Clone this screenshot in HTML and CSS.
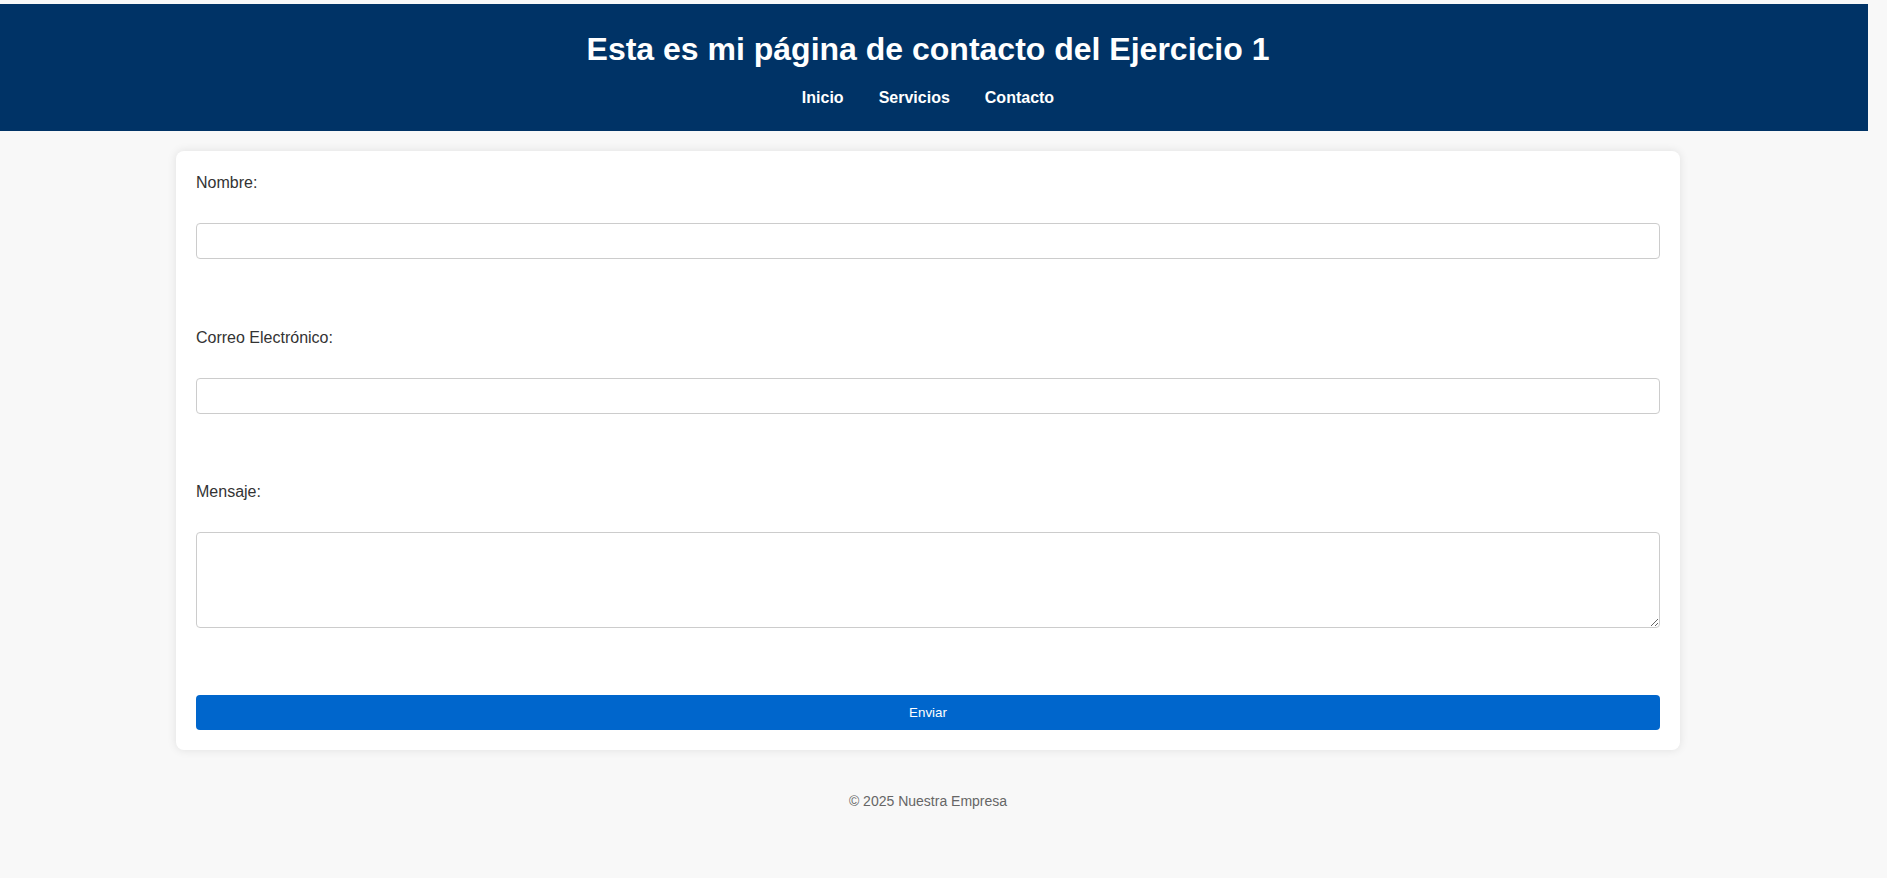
FILE: index.html
```html
<!DOCTYPE html>
<html lang="es">
<head>
<meta charset="utf-8">
<title>Contacto</title>
<link rel="stylesheet" href="styles.css">
</head>
<body>
<header class="site-header">
  <h1 class="site-title">Esta es mi página de contacto del Ejercicio 1</h1>
  <nav class="site-nav">
    <a href="#" class="nav-link">Inicio</a>
    <a href="#" class="nav-link">Servicios</a>
    <a href="#" class="nav-link">Contacto</a>
  </nav>
</header>
<div class="page">
  <main class="card">
    <form class="contact-form">
      <label class="field-label" for="nombre">Nombre:</label>
      <input class="field-input" type="text" id="nombre">
      <label class="field-label" for="correo">Correo Electrónico:</label>
      <input class="field-input" type="email" id="correo">
      <label class="field-label" for="mensaje">Mensaje:</label>
      <textarea class="field-textarea" id="mensaje"></textarea>
      <button class="submit-btn" type="submit">Enviar</button>
    </form>
  </main>
  <footer class="site-footer">© 2025 Nuestra Empresa</footer>
</div>
</body>
</html>
```
FILE: styles.css
```css
html, body {
  margin: 0;
  padding: 0;
}
body {
  background: #f8f8f8;
  font-family: "Liberation Sans", Arial, sans-serif;
  color: #333;
}
.site-header {
  margin: 4px 19px 0 0;
  padding: 27px 12px 24px 0;
  background: #003366;
  color: #fff;
  text-align: center;
}
.site-title {
  margin: 0 0 21px;
  font-size: 32px;
  font-weight: bold;
}
.site-nav {
  display: flex;
  justify-content: center;
  gap: 35px;
  font-size: 16px;
  font-weight: bold;
}
.nav-link {
  color: #fff;
  text-decoration: none;
}
.page {
  padding-right: 31px;
}
.card {
  box-sizing: border-box;
  width: 1504px;
  margin: 20px auto 0;
  padding: 23px 20px 20px;
  background: #fff;
  border-radius: 8px;
  box-shadow: 0 0 10px rgba(0, 0, 0, 0.1);
}
.contact-form {
  display: flex;
  flex-direction: column;
}
.field-label {
  display: block;
  font-size: 16px;
  color: #333;
  margin-bottom: 31px;
}
.field-input,
.field-textarea {
  box-sizing: border-box;
  width: 100%;
  border: 1px solid #ccc;
  border-radius: 4px;
  background: #fff;
  font-family: "Liberation Sans", Arial, sans-serif;
  font-size: 14px;
  padding: 8px;
}
.field-input {
  height: 36px;
  margin-bottom: 69.5px;
}
.field-textarea {
  height: 96px;
  margin-bottom: 67px;
}
.submit-btn {
  box-sizing: border-box;
  width: 100%;
  height: 35px;
  border: none;
  border-radius: 4px;
  background: #0066cc;
  color: #fff;
  font-family: "Liberation Sans", Arial, sans-serif;
  font-size: 13.33px;
  cursor: pointer;
}
.site-footer {
  margin-top: 23px;
  padding: 20px 0;
  text-align: center;
  font-size: 14px;
  color: #666;
}
```
